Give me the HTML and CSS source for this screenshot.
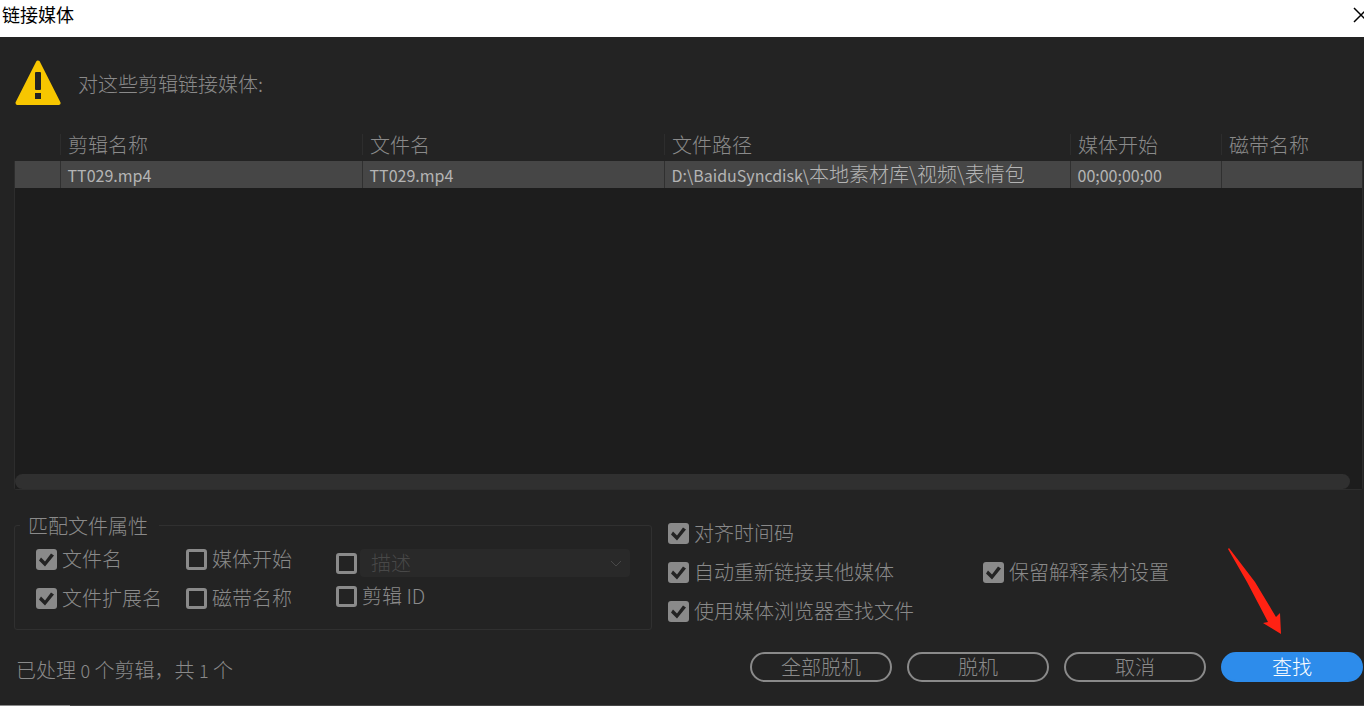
FILE: index.html
```
<!DOCTYPE html>
<html lang="zh-CN">
<head>
    <meta charset="utf-8">
    <title>链接媒体</title>
    <link rel="stylesheet" href="styles.css">
</head>
<body>
    <header class="titlebar">
        <h1>链接媒体</h1>
        <button class="close" type="button" aria-label="关闭">
            <svg width="16" height="16" viewBox="0 0 16 16"><path d="M1 1L15 15M15 1L1 15" stroke="#000" stroke-width="1.5" fill="none"/></svg>
        </button>
    </header>

    <main class="dialog">
        <div class="message">
            <svg width="46" height="46" viewBox="0 0 46 46">
                <path d="M23 2.5L43.5 43H2.5Z" fill="#f7c600" stroke="#f7c600" stroke-width="4" stroke-linejoin="round"/>
                <rect x="20" y="12" width="6" height="18" rx="1" fill="#232323"/>
                <rect x="20" y="33" width="6" height="6" fill="#232323"/>
            </svg>
            <p>对这些剪辑链接媒体:</p>
        </div>

        <div class="clip-list">
            <div class="clip-area">
                <table>
                    <colgroup>
                        <col class="col-icon">
                        <col class="col-name">
                        <col class="col-name">
                        <col class="col-path">
                        <col class="col-start">
                        <col>
                    </colgroup>
                    <thead>
                        <tr>
                            <th></th>
                            <th><span>剪辑名称</span></th>
                            <th><span>文件名</span></th>
                            <th><span>文件路径</span></th>
                            <th><span>媒体开始</span></th>
                            <th><span>磁带名称</span></th>
                        </tr>
                    </thead>
                    <tbody>
                        <tr>
                            <td></td>
                            <td>TT029.mp4</td>
                            <td>TT029.mp4</td>
                            <td>D:\BaiduSyncdisk\<span class="cjk">本地素材库\视频\表情包</span></td>
                            <td>00;00;00;00</td>
                            <td></td>
                        </tr>
                    </tbody>
                </table>
                <div class="scrollbar"></div>
            </div>
        </div>

        <div class="options">
            <fieldset class="match">
                <legend>匹配文件属性</legend>
                <div class="match-col">
                    <label><input type="checkbox" checked>文件名</label>
                    <label><input type="checkbox" checked>文件扩展名</label>
                </div>
                <div class="match-col">
                    <label><input type="checkbox">媒体开始</label>
                    <label><input type="checkbox">磁带名称</label>
                </div>
                <div class="match-col match-extra">
                    <div class="describe">
                        <input type="checkbox" aria-label="描述">
                        <div class="select-wrap">
                            <select aria-label="描述字段" disabled>
                                <option>描述</option>
                            </select>
                            <svg width="12" height="8" viewBox="0 0 12 8"><path d="M1 1L6 6L11 1" stroke="#484848" fill="none"/></svg>
                        </div>
                    </div>
                    <label><input type="checkbox">剪辑 ID</label>
                </div>
            </fieldset>

            <div class="settings">
                <label><input type="checkbox" checked>对齐时间码</label>
                <label class="first"><input type="checkbox" checked>自动重新链接其他媒体</label>
                <label><input type="checkbox" checked>保留解释素材设置</label>
                <label class="first"><input type="checkbox" checked>使用媒体浏览器查找文件</label>
            </div>
        </div>

        <footer class="footer">
            <p>已处理 <small>0</small> 个剪辑，共 <small>1</small> 个</p>
            <div class="buttons">
                <button type="button">全部脱机</button>
                <button type="button">脱机</button>
                <button type="button">取消</button>
                <button type="button" class="primary">查找</button>
                <svg class="arrow" width="54" height="87" viewBox="0 0 54 87"><path d="M0 1L1 0L27 34L48 69L52 65L53 86L35 75L40 74L19 34Z" fill="#ff2213"/></svg>
            </div>
        </footer>
    </main>
    <div class="edge"></div>
</body>
</html>
```
FILE: styles.css
```
* {
    box-sizing: border-box;
}

body {
    margin: 0;
    min-height: 100vh;
    display: flex;
    flex-direction: column;
    overflow-x: hidden;
    background: #232323;
    color: #8a8a8a;
    font-family: "Noto Sans CJK SC", sans-serif;
    font-weight: 300;
    font-size: 20px;
    line-height: 28px;
}

p {
    margin: 0;
}

/* Title bar */
.titlebar {
    display: flex;
    justify-content: space-between;
    align-items: flex-start;
    height: 37px;
    padding-left: 2px;
    background: #fff;
    overflow: hidden;
}

h1 {
    margin: 0;
    color: #000;
    font-size: 18px;
    font-weight: 400;
    line-height: 29px;
}

.close {
    display: flex;
    margin: 7px -5px 0 0;
    padding: 0;
    border: none;
    background: none;
}

/* Dialog */
.dialog {
    flex: 1;
    display: flex;
    flex-direction: column;
    padding: 23px 1px 21px 14px;
}

.message {
    display: flex;
    align-items: center;
    gap: 17px;
    padding-left: 1px;
    margin-bottom: 26px;
}

.message p {
    padding-top: 2px;
}

/* Clip list: the frame starts below the column headings */
.clip-list {
    flex: 1;
    display: flex;
    min-height: 200px;
    padding: 0 1px 1px;
    background: linear-gradient(#232323 29px, #2d2d2d 29px);
    border-radius: 3px;
}

.clip-area {
    flex: 1;
    display: flex;
    flex-direction: column;
    justify-content: space-between;
    background: #1d1d1d;
}

table {
    width: 100%;
    table-layout: fixed;
    border-collapse: collapse;
}

.col-icon {
    width: 45px;
}

.col-name {
    width: 302px;
}

.col-path {
    width: 406px;
}

.col-start {
    width: 151px;
}

th {
    height: 29px;
    padding: 0 0 4px;
    background: #232323;
    font-weight: 300;
    text-align: left;
    line-height: 21px;
}

th span {
    display: block;
    padding-left: 7px;
    border-left: 1px solid #2d2d2d;
}

td {
    height: 27px;
    padding: 0 0 0 7px;
    background: #464646;
    border-left: 1px solid #303030;
    color: #b4b4b4;
    font-size: 16px;
    font-weight: 400;
    line-height: 26px;
    white-space: nowrap;
}

td:first-child {
    border-left: none;
}

.cjk {
    font-size: 20px;
    font-weight: 300;
}

.scrollbar {
    height: 15px;
    margin-right: 12px;
    border-radius: 8px;
    background: #303030;
}

/* Check boxes */
label {
    display: flex;
    align-items: center;
    gap: 5px;
    white-space: nowrap;
}

input[type="checkbox"] {
    appearance: none;
    flex: none;
    width: 21px;
    height: 21px;
    margin: 0;
    border: 3px solid #8a8a8a;
    border-radius: 3px;
}

input[type="checkbox"]:checked {
    border: none;
    background: #8a8a8a;
}

input[type="checkbox"]:checked::before {
    content: "";
    display: block;
    width: 21px;
    height: 21px;
    background: #232323;
    clip-path: polygon(3px 12px, 5px 9px, 9px 13px, 15px 5px, 18px 7px, 9px 18px);
}

/* Options */
.options {
    display: grid;
    grid-template-columns: 638fr 695fr;
    column-gap: 16px;
    margin-top: 21px;
}

.match {
    display: flex;
    align-items: flex-start;
    min-width: 0;
    min-height: 119px;
    margin: 0;
    padding: 0 21px;
    border: 1px solid #303030;
    border-radius: 3px;
}

legend {
    margin-left: -16px;
    padding: 2px 11px 0 8px;
    line-height: 26px;
}

.match-col {
    display: flex;
    flex: 0 0 150px;
    flex-direction: column;
    gap: 11px;
    padding-top: 6px;
}

.match-extra {
    flex: 1;
    gap: 5px;
    min-width: 0;
    padding-top: 10px;
}

.describe {
    display: flex;
    align-items: center;
    gap: 3px;
}

.select-wrap {
    flex: 1;
    position: relative;
}

select {
    appearance: none;
    display: block;
    width: 100%;
    height: 28px;
    padding: 0 11px;
    border: none;
    border-radius: 4px;
    background: #292929;
    color: #484848;
    font: inherit;
    opacity: 1;
}

.select-wrap svg {
    position: absolute;
    right: 8px;
    top: 11px;
}

.settings {
    display: grid;
    grid-template-columns: 315px 1fr;
    row-gap: 11px;
    align-content: start;
    padding-top: 8px;
}

.settings .first {
    grid-column: 1;
}

/* Footer */
.footer {
    display: flex;
    justify-content: space-between;
    align-items: flex-start;
    margin-top: 22px;
    padding-left: 2px;
}

.footer p {
    padding-top: 4px;
}

small {
    font-size: 18px;
}

.buttons {
    position: relative;
    display: flex;
    gap: 15px;
}

.buttons button {
    width: 142px;
    height: 30px;
    padding: 0;
    border: 2px solid #8a8a8a;
    border-radius: 15px;
    background: none;
    color: #8a8a8a;
    font: inherit;
    line-height: 24px;
}

.buttons .primary {
    border-color: #2d8ceb;
    background: #2d8ceb;
    color: #fff;
}

.arrow {
    position: absolute;
    right: 81px;
    bottom: 47px;
}

/* Bottom window edge */
.edge {
    height: 1px;
    background: linear-gradient(to right, #8a8a8a 70px, #464646 70px);
}
```
